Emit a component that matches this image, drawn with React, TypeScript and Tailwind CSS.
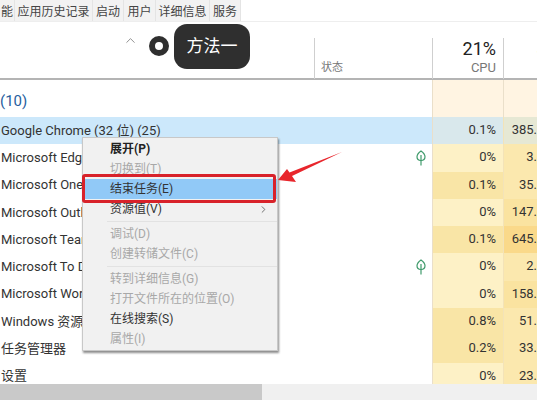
import { ChevronRight, ChevronUp } from 'lucide-react';

const tabs = [
  { label: '能', width: 'w-[15px]' },
  { label: '应用历史记录', width: 'w-[78px]' },
  { label: '启动', width: 'w-[31px]' },
  { label: '用户', width: 'w-[32px]' },
  { label: '详细信息', width: 'w-[54px]' },
  { label: '服务', width: 'w-[31px]' },
];

const rows = [
  { name: 'Google Chrome (32 位) (25)', cpu: '0.1%', mem: '385.', cpuBg: 'bg-[#d9e8ec]', memBg: 'bg-[#e6e8d4]', selected: true },
  { name: 'Microsoft Edge', cpu: '0%', mem: '3.', cpuBg: 'bg-[#fdf1c6]', memBg: 'bg-[#fbe8ae]', leaf: true },
  { name: 'Microsoft OneDrive', cpu: '0.1%', mem: '35.', cpuBg: 'bg-[#f9e5a6]', memBg: 'bg-[#fbe8ae]' },
  { name: 'Microsoft Outlook', cpu: '0%', mem: '147.', cpuBg: 'bg-[#fdf1c6]', memBg: 'bg-[#fae3a0]' },
  { name: 'Microsoft Teams', cpu: '0.1%', mem: '645.', cpuBg: 'bg-[#f9e5a6]', memBg: 'bg-[#fad98a]' },
  { name: 'Microsoft To Do', cpu: '0%', mem: '2.', cpuBg: 'bg-[#fdf1c6]', memBg: 'bg-[#fbe8ae]', leaf: true },
  { name: 'Microsoft Word', cpu: '0%', mem: '158.', cpuBg: 'bg-[#fdf1c6]', memBg: 'bg-[#fae3a0]' },
  { name: 'Windows 资源管理器', cpu: '0.8%', mem: '51.', cpuBg: 'bg-[#f9e5a6]', memBg: 'bg-[#fbe8ae]' },
  { name: '任务管理器', cpu: '0.2%', mem: '33.', cpuBg: 'bg-[#f9e5a6]', memBg: 'bg-[#fbe8ae]' },
  { name: '设置', cpu: '0%', mem: '23.', cpuBg: 'bg-[#fdf1c6]', memBg: 'bg-[#fbe8ae]' },
];

const menuGroups = [
  [
    { label: '展开(P)', tone: 'font-bold text-[#222]' },
    { label: '切换到(T)', tone: 'text-[#a8a8a8]' },
    { label: '结束任务(E)', tone: 'text-[#333]', active: true },
    { label: '资源值(V)', tone: 'text-[#333]', more: true },
  ],
  [
    { label: '调试(D)', tone: 'text-[#a8a8a8]' },
    { label: '创建转储文件(C)', tone: 'text-[#a8a8a8]' },
  ],
  [
    { label: '转到详细信息(G)', tone: 'text-[#a8a8a8]' },
    { label: '打开文件所在的位置(O)', tone: 'text-[#a8a8a8]' },
    { label: '在线搜索(S)', tone: 'text-[#333]' },
    { label: '属性(I)', tone: 'text-[#a8a8a8]' },
  ],
];

const Leaf = () => (
  <svg width="10" height="16" viewBox="0 0 10 16" fill="none" stroke="#3f9a6b" strokeWidth="1.2">
    <path d="M5 1C7.500 2.800 9 5 9 6.800C9 9 7.200 10.500 5 10.500C2.800 10.500 1 9 1 6.800C1 5 2.500 2.800 5 1Z" />
    <path d="M5 5V15.500" />
  </svg>
);

const App = () => {
  return (
    <div className="relative flex h-[400px] w-[537px] flex-col overflow-hidden bg-white font-['Roboto','Noto_Sans_CJK_SC',sans-serif] text-[13px] text-[#333]">
      <div className="flex h-[22px] shrink-0 items-center border-b border-[#eeeeee] text-xs">
        {tabs.map((tab) => (
          <div key={tab.label} className={`${tab.width} flex h-full items-center justify-center border-r border-[#e4e4e4] bg-[#f2f2f2] pt-[3px] text-[#444]`}>
            {tab.label}
          </div>
        ))}
      </div>

      <div className="grid h-[58px] shrink-0 grid-cols-[314px_118px_71px_34px] border-b-2 border-[#b4b4b4]">
        <div className="flex items-start justify-end pr-[176px] pt-[11px]">
          <ChevronUp size={15} strokeWidth={1.3} className="text-[#777]" />
        </div>
        <div className="mt-[16px] flex items-end border-l border-[#cfcfcf] pb-[3px] pl-[6px] text-[11px] text-[#777]">状态</div>
        <div className="mt-[16px] flex flex-col items-end justify-end border-l border-[#cfcfcf] pb-[3px] pr-[7px]">
          <span className="text-[18px] leading-[22px] text-[#222]">21%</span>
          <span className="text-[13px] leading-[16px] text-[#777]">CPU</span>
        </div>
        <div className="mt-[16px] flex flex-col items-start justify-end border-l border-[#cfcfcf] pb-[3px] pl-[32px]">
          <span className="text-[18px] leading-[22px] text-[#222]">5</span>
          <span className="text-xs leading-[16px]">&nbsp;</span>
        </div>
      </div>

      <div className="min-h-0 flex-1 overflow-hidden">
        <div className="grid h-[37px] grid-cols-[432px_71px_34px]">
          <div className="pt-[11px] text-[15px] leading-[20px] text-[#26609e]">(10)</div>
          <div className="border-l border-[#eadfca] bg-[#fff4e2]" />
          <div className="border-l border-[#eadfca] bg-[#fff4e2]" />
        </div>
        {rows.map((row) => (
          <div key={row.name} className={`grid h-[27.3px] grid-cols-[432px_71px_34px] items-stretch whitespace-nowrap leading-[26px] ${row.selected ? 'bg-[#cce8fb]' : ''}`}>
            <div className="flex items-center justify-between pl-px pr-[6px]">
              <span>{row.name}</span>
              {row.leaf && <Leaf />}
            </div>
            <div className={`${row.cpuBg} border-l border-[#eadfca] pr-[7px] text-right`}>{row.cpu}</div>
            <div className={`${row.memBg} overflow-hidden border-l border-[#f3e3b8] text-right`}>{row.mem}</div>
          </div>
        ))}
      </div>

      <div className="flex h-[16px] shrink-0 bg-[#f0f0f0]">
        <div className="w-[262px] bg-[#c9c9c9]" />
      </div>

      {/* callout */}
      <div className="absolute left-[149px] top-[36px] size-[20px] rounded-full border-[6px] border-[#2f2f2f] bg-white" />
      <div className="absolute left-[174px] top-[24px] flex h-[45px] w-[76px] items-center justify-center rounded-[13px] bg-[#2f2f2f] text-[17px] text-white">方法一</div>

      {/* context menu */}
      <div className="absolute left-[82px] top-[137px] w-[196px] border border-[#c8c8c8] bg-[#f1f1f1] py-px shadow-[1px_2px_2px_rgba(0,0,0,0.45)]">
        {menuGroups.map((group, i) => (
          <div key={i} className={i > 0 ? 'ml-[24px] mt-[2px] border-t border-[#e2e2e2] pt-[2px]' : ''}>
            {group.map((item) => (
              <div
                key={item.label}
                className={`flex h-[20px] items-center justify-between pr-[8px] text-xs ${i > 0 ? 'pl-[3px]' : 'pl-[27px]'} ${item.tone} ${item.active ? 'bg-[#91c9f7]' : ''}`}
              >
                <span>{item.label}</span>
                {item.more && <ChevronRight size={11} className="text-[#666]" />}
              </div>
            ))}
          </div>
        ))}
      </div>
      <div className="absolute left-[82px] top-[174px] h-[29px] w-[194px] rounded-[3px] border-[3px] border-[#d8222a]" />

      {/* arrow */}
      <svg className="absolute left-[276px] top-[150px]" width="70" height="36" viewBox="0 0 70 36">
        <path d="M2 30L11 19L13.500 22.500L66 2L16 26L20 32Z" fill="#e8262c" />
      </svg>
    </div>
  );
};

export default App;
